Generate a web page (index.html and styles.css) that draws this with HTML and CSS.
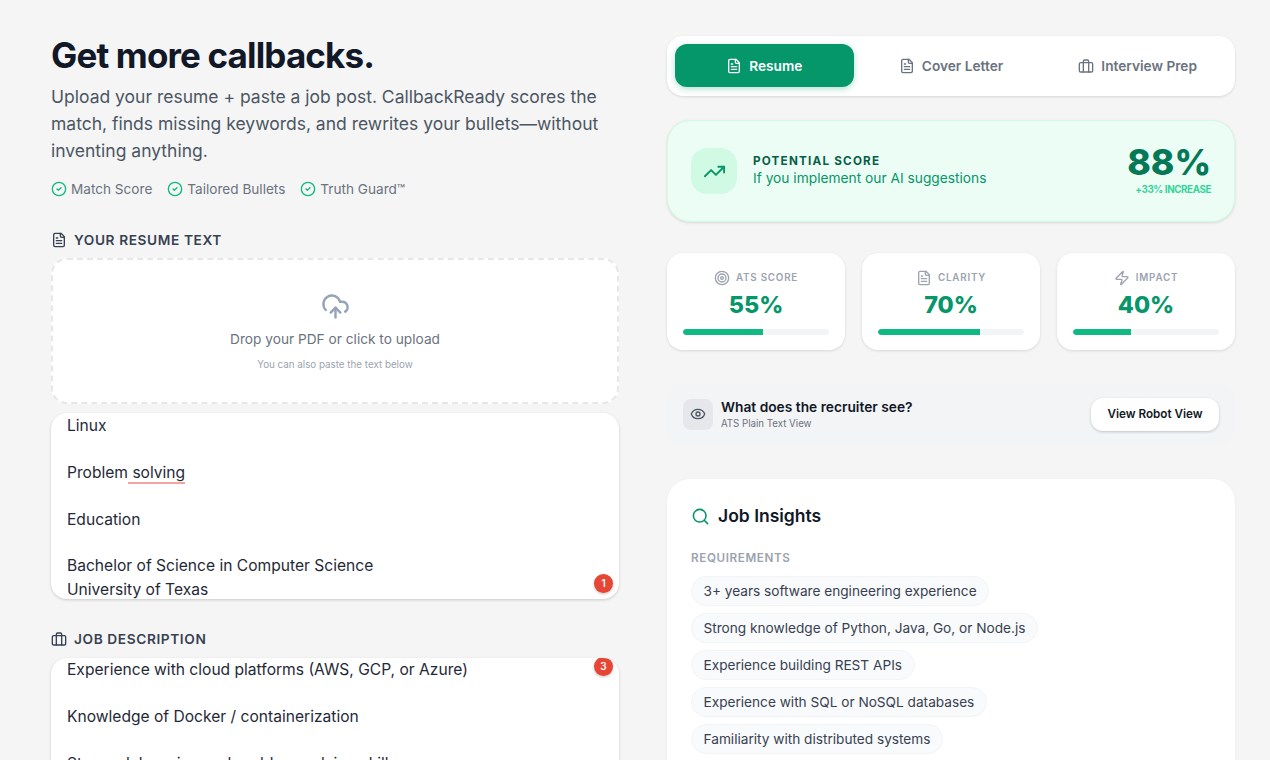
FILE: index.html
```html
<!DOCTYPE html>
<html lang="en">
  <head>
    <meta charset="UTF-8" />
    <meta name="viewport" content="width=device-width, initial-scale=1.0" />
    <title>CallbackReady</title>
    <link rel="stylesheet" href="styles.css">
  </head>
  <body>
    <svg class="icon-defs" width="0" height="0">
      <defs>
        <g id="i-file" fill="none" stroke="currentColor" stroke-width="2" stroke-linecap="round" stroke-linejoin="round">
          <path d="M15 2H6a2 2 0 0 0-2 2v16a2 2 0 0 0 2 2h12a2 2 0 0 0 2-2V7Z" />
          <path d="M14 2v4a2 2 0 0 0 2 2h4" />
          <path d="M10 9H8" /><path d="M16 13H8" /><path d="M16 17H8" />
        </g>
        <g id="i-case" fill="none" stroke="currentColor" stroke-width="2" stroke-linecap="round" stroke-linejoin="round">
          <rect width="20" height="14" x="2" y="7" rx="2" ry="2" />
          <path d="M16 21V5a2 2 0 0 0-2-2h-4a2 2 0 0 0-2 2v16" />
        </g>
        <g id="i-check" fill="none" stroke="currentColor" stroke-width="2" stroke-linecap="round" stroke-linejoin="round">
          <circle cx="12" cy="12" r="10" />
          <path d="m9 12 2 2 4-4" />
        </g>
      </defs>
    </svg>

    <div class="container">
      <div class="col">
        <h1>Get more callbacks.</h1>
        <p class="intro">Upload your resume + paste a job post. CallbackReady scores the match, finds missing keywords, and rewrites your bullets—without inventing anything.</p>
        <div class="perks">
          <span class="perk"><svg viewBox="0 0 24 24"><use href="#i-check" /></svg>Match Score</span>
          <span class="perk"><svg viewBox="0 0 24 24"><use href="#i-check" /></svg>Tailored Bullets</span>
          <span class="perk"><svg viewBox="0 0 24 24"><use href="#i-check" /></svg>Truth Guard™</span>
        </div>

        <div class="field-label"><svg viewBox="0 0 24 24"><use href="#i-file" /></svg>YOUR RESUME TEXT</div>
        <div class="dropzone">
          <svg class="cloud" viewBox="0 0 24 24" fill="none" stroke="currentColor" stroke-width="2" stroke-linecap="round" stroke-linejoin="round">
            <path d="M12 13v8" />
            <path d="M4 14.899A7 7 0 1 1 15.71 8h1.79a4.5 4.5 0 0 1 2.5 8.242" />
            <path d="m8 17 4-4 4 4" />
          </svg>
          <div class="drop-title">Drop your PDF or click to upload</div>
          <div class="drop-sub">You can also paste the text below</div>
        </div>
        <div class="text-box resume-box">
          <div>Linux</div>
          <div>&nbsp;</div>
          <div>Problem<span class="squiggle"> solving</span></div>
          <div>&nbsp;</div>
          <div>Education</div>
          <div>&nbsp;</div>
          <div>Bachelor of Science in Computer Science</div>
          <div>University of Texas</div>
          <span class="badge badge-bottom">1</span>
        </div>

        <div class="field-label job-label"><svg viewBox="0 0 24 24"><use href="#i-case" /></svg>JOB DESCRIPTION</div>
        <div class="text-box job-box">
          <div>Experience with cloud platforms (AWS, GCP, or Azure)</div>
          <div>&nbsp;</div>
          <div>Knowledge of Docker / containerization</div>
          <div>&nbsp;</div>
          <div>Strong debugging and problem-solving skills</div>
          <span class="badge badge-top">3</span>
        </div>
      </div>

      <div class="col">
        <div class="tabs">
          <div class="tab active"><svg viewBox="0 0 24 24"><use href="#i-file" /></svg>Resume</div>
          <div class="tab"><svg viewBox="0 0 24 24"><use href="#i-file" /></svg>Cover Letter</div>
          <div class="tab"><svg viewBox="0 0 24 24"><use href="#i-case" /></svg>Interview Prep</div>
        </div>

        <div class="potential">
          <div class="potential-icon">
            <svg viewBox="0 0 24 24" fill="none" stroke="currentColor" stroke-width="2" stroke-linecap="round" stroke-linejoin="round">
              <path d="M22 7 13.5 15.5 8.5 10.5 2 17" />
              <path d="M16 7h6v6" />
            </svg>
          </div>
          <div class="potential-text">
            <div class="potential-title">POTENTIAL SCORE</div>
            <div class="potential-sub">If you implement our AI suggestions</div>
          </div>
          <div class="potential-score">
            <div class="potential-num">88%</div>
            <div class="potential-inc">+33% INCREASE</div>
          </div>
        </div>

        <div class="scores">
          <div class="score-card">
            <div class="score-label">
              <svg viewBox="0 0 24 24" fill="none" stroke="currentColor" stroke-width="2"><circle cx="12" cy="12" r="10" /><circle cx="12" cy="12" r="6" /><circle cx="12" cy="12" r="2" /></svg>
              ATS SCORE
            </div>
            <div class="score-num">55%</div>
            <div class="bar"><div class="bar-fill" style="width: 55%"></div></div>
          </div>
          <div class="score-card">
            <div class="score-label"><svg viewBox="0 0 24 24"><use href="#i-file" /></svg>CLARITY</div>
            <div class="score-num">70%</div>
            <div class="bar"><div class="bar-fill" style="width: 70%"></div></div>
          </div>
          <div class="score-card">
            <div class="score-label">
              <svg viewBox="0 0 24 24" fill="none" stroke="currentColor" stroke-width="2" stroke-linecap="round" stroke-linejoin="round"><path d="M4 14a1 1 0 0 1-.78-1.63l9.9-10.2a.5.5 0 0 1 .86.46l-1.92 6.02A1 1 0 0 0 13 10h7a1 1 0 0 1 .78 1.63l-9.9 10.2a.5.5 0 0 1-.86-.46l1.92-6.02A1 1 0 0 0 11 14z" /></svg>
              IMPACT
            </div>
            <div class="score-num">40%</div>
            <div class="bar"><div class="bar-fill" style="width: 40%"></div></div>
          </div>
        </div>

        <div class="recruiter">
          <div class="recruiter-icon">
            <svg viewBox="0 0 24 24" fill="none" stroke="currentColor" stroke-width="2" stroke-linecap="round" stroke-linejoin="round">
              <path d="M2.062 12.348a1 1 0 0 1 0-.696 10.75 10.75 0 0 1 19.876 0 1 1 0 0 1 0 .696 10.75 10.75 0 0 1-19.876 0" />
              <circle cx="12" cy="12" r="3" />
            </svg>
          </div>
          <div class="recruiter-text">
            <div class="recruiter-title">What does the recruiter see?</div>
            <div class="recruiter-sub">ATS Plain Text View</div>
          </div>
          <button class="robot-btn">View Robot View</button>
        </div>

        <div class="insights">
          <div class="insights-title">
            <svg viewBox="0 0 24 24" fill="none" stroke="currentColor" stroke-width="2" stroke-linecap="round" stroke-linejoin="round"><path d="m21 21-4.34-4.34" /><circle cx="11" cy="11" r="8" /></svg>
            Job Insights
          </div>
          <div class="req-label">REQUIREMENTS</div>
          <div class="pills">
            <span class="pill">3+ years software engineering experience</span>
            <span class="pill">Strong knowledge of Python, Java, Go, or Node.js</span>
            <span class="pill">Experience building REST APIs</span>
            <span class="pill">Experience with SQL or NoSQL databases</span>
            <span class="pill">Familiarity with distributed systems</span>
          </div>
        </div>
      </div>
    </div>
  </body>
</html>
```

FILE: styles.css
```css
html,
body {
  height: 760px;
  overflow: hidden;
}
body {
  font-family: 'Inter', 'Liberation Sans', sans-serif;
  margin: 0;
  background-color: #f5f5f5;
  color: #111827;
}
.icon-defs {
  position: absolute;
}
.container {
  display: grid;
  grid-template-columns: 568px 568px;
  gap: 48px;
  padding: 36px 35px 0 51px;
}
.col {
  min-width: 0;
}

h1 {
  margin: 0;
  font-size: 35px;
  line-height: 38px;
  font-weight: 700;
  letter-spacing: -0.85px;
  color: #111827;
}
.intro {
  margin: 9px 0 0;
  font-size: 17.5px;
  line-height: 27px;
  color: #4b5563;
}
.perks {
  display: flex;
  gap: 15px;
  margin-top: 15px;
}
.perk {
  display: flex;
  align-items: center;
  gap: 4px;
  font-size: 13.6px;
  line-height: 20px;
  color: #6b7280;
}
.perk svg {
  width: 16px;
  height: 16px;
  color: #10b981;
}
.field-label {
  display: flex;
  align-items: center;
  gap: 7px;
  margin-top: 31px;
  font-size: 13.7px;
  line-height: 20px;
  font-weight: 600;
  letter-spacing: 0.6px;
  color: #374151;
}
.field-label svg {
  width: 16px;
  height: 16px;
}
.dropzone {
  display: flex;
  flex-direction: column;
  align-items: center;
  box-sizing: border-box;
  height: 146px;
  margin-top: 8px;
  padding-top: 32px;
  background-color: #fff;
  border: 2px dashed #e5e7eb;
  border-radius: 16px;
}
.cloud {
  width: 29px;
  height: 29px;
  color: #94a3b8;
}
.drop-title {
  margin-top: 8px;
  font-size: 13.7px;
  line-height: 20px;
  color: #6b7280;
}
.drop-sub {
  margin-top: 9px;
  font-size: 9.8px;
  line-height: 14px;
  color: #9ca3af;
}
.text-box {
  position: relative;
  box-sizing: border-box;
  height: 186px;
  padding: 0 16px;
  overflow: hidden;
  background-color: #fff;
  border-radius: 16px;
  box-shadow: 0 1px 3px rgba(0, 0, 0, 0.18);
  font-size: 15.6px;
  line-height: 23.4px;
  color: #1f2937;
}
.resume-box {
  margin-top: 9px;
  padding-top: 1px;
}
.job-box {
  margin-top: 9px;
}
.job-label {
  margin-top: 30px;
}
.squiggle {
  border-bottom: 2px solid #f4a3a3;
}
.badge {
  position: absolute;
  right: 6px;
  width: 19px;
  height: 19px;
  background-color: #e74536;
  border-radius: 50%;
  box-shadow: 0 1px 3px rgba(0, 0, 0, 0.25);
  font-size: 10px;
  line-height: 19px;
  font-weight: 600;
  text-align: center;
  color: #fff;
}
.badge-bottom {
  bottom: 6px;
}
.badge-top {
  top: -1px;
}

.tabs {
  display: flex;
  gap: 8px;
  padding: 8px 8px 9px;
  background-color: #fff;
  border-radius: 16px;
  box-shadow: 0 1px 3px rgba(0, 0, 0, 0.12);
}
.tab {
  flex: 1;
  display: flex;
  align-items: center;
  justify-content: center;
  gap: 7px;
  height: 43px;
  border-radius: 12px;
  font-size: 13.7px;
  font-weight: 600;
  color: #6b7280;
}
.tab svg {
  width: 16px;
  height: 16px;
}
.tab.active {
  background-color: #059669;
  color: #fff;
  box-shadow: 0 2px 6px rgba(5, 150, 105, 0.3);
}
.potential {
  display: flex;
  align-items: center;
  box-sizing: border-box;
  height: 102px;
  margin-top: 24px;
  padding: 0 23px;
  background-color: #ecfdf5;
  border: 1px solid #d1fae5;
  border-radius: 23px;
  box-shadow: 0 1px 3px rgba(0, 0, 0, 0.12);
}
.potential-icon {
  display: flex;
  align-items: center;
  justify-content: center;
  width: 46px;
  height: 46px;
  background-color: #d1fae5;
  border-radius: 16px;
  color: #059669;
}
.potential-icon svg {
  width: 23px;
  height: 23px;
}
.potential-text {
  flex: 1;
  margin: 0 0 2px 16px;
}
.potential-title {
  font-size: 11.7px;
  line-height: 16px;
  font-weight: 700;
  letter-spacing: 1.2px;
  color: #065f46;
}
.potential-sub {
  font-size: 13.75px;
  line-height: 19px;
  color: #059669;
}
.potential-score {
  text-align: right;
}
.potential-num {
  font-size: 35.6px;
  line-height: 35px;
  font-weight: 800;
  color: #047857;
}
.potential-inc {
  margin-top: 3px;
  font-size: 9.8px;
  line-height: 14px;
  font-weight: 700;
  letter-spacing: -0.4px;
  color: #34d399;
}
.scores {
  display: grid;
  grid-template-columns: repeat(3, 1fr);
  gap: 17px;
  margin-top: 31px;
}
.score-card {
  box-sizing: border-box;
  height: 97px;
  padding: 16px;
  background-color: #fff;
  border-radius: 16px;
  box-shadow: 0 1px 3px rgba(0, 0, 0, 0.12);
  text-align: center;
}
.score-label {
  display: flex;
  align-items: center;
  justify-content: center;
  gap: 6px;
  margin-top: 1px;
  font-size: 9.8px;
  line-height: 16px;
  font-weight: 600;
  letter-spacing: 0.8px;
  color: #9ca3af;
}
.score-label svg {
  width: 16px;
  height: 16px;
}
.score-num {
  margin-top: 3px;
  font-size: 23.4px;
  line-height: 32px;
  font-weight: 800;
  color: #059669;
}
.bar {
  height: 6px;
  margin-top: 8px;
  overflow: hidden;
  background-color: #f3f4f6;
  border-radius: 3px;
}
.bar-fill {
  height: 100%;
  background-color: #10b981;
  border-radius: 3px 0 0 3px;
}
.recruiter {
  display: flex;
  align-items: center;
  box-sizing: border-box;
  height: 62px;
  margin-top: 33px;
  padding: 0 16px;
  background-color: #f3f4f6;
  border-radius: 16px;
}
.recruiter-icon {
  display: flex;
  align-items: center;
  justify-content: center;
  width: 30px;
  height: 31px;
  background-color: #e5e7eb;
  border-radius: 8px;
  color: #4b5563;
}
.recruiter-icon svg {
  width: 16px;
  height: 16px;
}
.recruiter-text {
  flex: 1;
  margin-left: 8px;
}
.recruiter-title {
  font-size: 13.75px;
  line-height: 18px;
  font-weight: 600;
  color: #111827;
}
.recruiter-sub {
  margin-top: 1px;
  font-size: 9.7px;
  line-height: 14px;
  color: #6b7280;
}
.robot-btn {
  width: 128px;
  height: 33px;
  padding: 0;
  background-color: #fff;
  border: none;
  border-radius: 12px;
  box-shadow: 0 1px 3px rgba(0, 0, 0, 0.2);
  font-family: inherit;
  font-size: 11.7px;
  font-weight: 600;
  color: #111827;
}
.insights {
  box-sizing: border-box;
  height: 320px;
  margin-top: 34px;
  padding: 24px;
  background-color: #fff;
  border-radius: 23px;
  box-shadow: 0 1px 3px rgba(0, 0, 0, 0.06);
}
.insights-title {
  display: flex;
  align-items: center;
  gap: 8px;
  font-size: 17.5px;
  line-height: 26px;
  font-weight: 600;
  color: #111827;
}
.insights-title svg {
  width: 19px;
  height: 19px;
  color: #059669;
}
.req-label {
  margin-top: 21px;
  font-size: 11.7px;
  line-height: 16px;
  font-weight: 600;
  letter-spacing: 0.6px;
  color: #9ca3af;
}
.pills {
  display: flex;
  flex-direction: column;
  align-items: flex-start;
  gap: 7px;
  margin-top: 10px;
}
.pill {
  box-sizing: border-box;
  height: 30px;
  padding: 0 11.5px;
  background-color: #f9fafb;
  border: 1px solid #f3f4f6;
  border-radius: 15px;
  font-size: 13.65px;
  line-height: 28px;
  color: #374151;
}
```
